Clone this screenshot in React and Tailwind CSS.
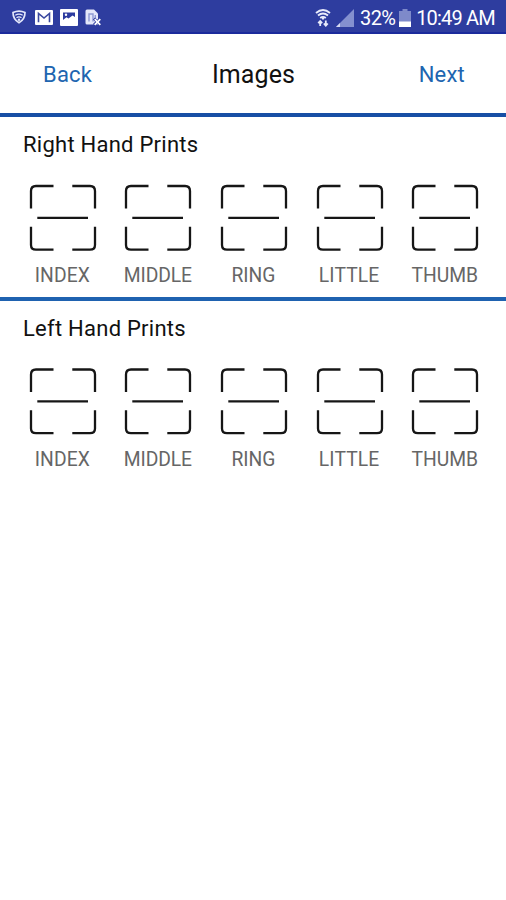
const FINGERS = [
  { label: 'INDEX', spacing: 'tracking-[0.1px]' },
  { label: 'MIDDLE', spacing: 'tracking-[-0.1px]' },
  { label: 'RING', spacing: 'tracking-[0px]' },
  { label: 'LITTLE', spacing: 'tracking-[0.1px]' },
  { label: 'THUMB', spacing: 'tracking-[0px]' },
];

const ShieldIcon = () => (
  <svg width="14" height="14" viewBox="0 0 14 14" fill="none" stroke="#e4e8fb">
    <path d="M1 2.6Q7 -.4 13 2.6Q13 9.5 7 12.8Q1 9.5 1 2.6Z" strokeWidth="1.7" />
    <path d="M3.3 5.2Q7 3.2 10.7 5.2M4.5 7.7Q7 6.2 9.5 7.7" strokeWidth="1.3" />
    <circle cx="7" cy="9.7" r="1.2" fill="#e4e8fb" stroke="none" />
  </svg>
);

const MailIcon = () => (
  <svg width="18" height="15" viewBox="0 0 18 15">
    <rect width="18" height="15" rx="1" fill="#fff" />
    <path d="M3.5 12.3V3.4L9 8L14.5 3.4V12.3" fill="none" stroke="#3a489f" strokeWidth="1.6" />
  </svg>
);

const PictureIcon = () => (
  <svg width="18" height="17" viewBox="0 0 18 17">
    <rect width="18" height="17" rx="1" fill="#fff" />
    <path d="M3 3.5H15V8L12.5 6.5L8.5 9.5L6.5 8.3L3 11Z" fill="#2c3b9f" />
    <circle cx="6" cy="5.8" r="1.2" fill="#fff" />
  </svg>
);

const DocumentIcon = () => (
  <svg width="17" height="17" viewBox="0 0 17 17">
    <path d="M2 .5H9L13 4.5V15.5H2Q.5 15.5 .5 14V2Q.5 .5 2 .5Z" fill="#e4e8fa" />
    <path d="M4 12.5V5H8V12.5M10.3 6V9.5" fill="none" stroke="#8f9bd3" strokeWidth="1.4" />
    <path d="M9 9.5L15.5 16M15.5 9.5L9 16" stroke="#2c3b9f" strokeWidth="3" />
    <path d="M9.7 10.2L15.3 15.8M15.3 10.2L9.7 15.8" stroke="#fff" strokeWidth="1.8" />
  </svg>
);

const WifiIcon = () => (
  <svg width="16" height="18" viewBox="0 0 16 18" fill="none" stroke="#e8ebfa">
    <path d="M1 4Q8 -1.8 15 4M3 6.6Q8 2.6 13 6.6M5.2 9Q8 6.8 10.8 9" strokeWidth="1.9" />
    <path d="M8 8V10.5" strokeWidth="2" />
    <path d="M5.2 17V12M3.2 14.2L5.2 12L7.2 14.2M10.8 11.5V16.5M8.8 14.5L10.8 16.7L12.8 14.5" strokeWidth="1.8" />
  </svg>
);

const SignalIcon = () => (
  <svg width="18" height="18" viewBox="0 0 18 18">
    <path d="M18 0V18H0Z" fill="#8490cf" />
    <path d="M4 14V18H0Z" fill="#d5daf2" />
  </svg>
);

const BatteryIcon = () => (
  <svg width="12" height="18" viewBox="0 0 12 18">
    <path d="M3.5 0H8.5V2H12V18H0V2H3.5Z" fill="#7e8aca" />
    <path d="M0 12.5H12V18H0Z" fill="#fff" />
  </svg>
);

const ScanIcon = ({ top = 0 }) => (
  <svg width="68" height="68" viewBox={`0 ${top} 68 68`} fill="none" stroke="#161616" strokeWidth="2.3">
    <path d="M2 24.5V7Q2 2 7 2H24.5" />
    <path d="M43.3 2H61Q66 2 66 7V24.5" />
    <path d="M2 42.8V61Q2 65.7 7 65.7H24.5" />
    <path d="M43.3 65.7H61Q66 65.7 66 61V42.8" />
    <path d="M8.3 33.8H59" />
  </svg>
);

const StatusBar = () => (
  <div className="flex h-[34px] items-center justify-between border-b-2 border-[#1b2b9c] bg-[#2e3d9f] pl-3 pr-[11px] text-white">
    <div className="flex items-center pt-0.5">
      <ShieldIcon />
      <div className="ml-[9px] flex items-center gap-[7px]">
        <MailIcon />
        <PictureIcon />
        <DocumentIcon />
      </div>
    </div>
    <div className="flex items-center pt-[3px]">
      <WifiIcon />
      <div className="ml-[5px] mr-[6px]"><SignalIcon /></div>
      <span className="text-[20px] leading-none tracking-[-0.7px]">32%</span>
      <div className="ml-[4px] mr-[5px]"><BatteryIcon /></div>
      <span className="text-[20px] leading-none tracking-[-0.8px]">10:49 AM</span>
    </div>
  </div>
);

const PrintSection = ({ title, iconTop }) => (
  <section className="flex flex-col">
    <h2 className="pl-[23px] pt-[15px] text-[22px] leading-[26px] tracking-[0.25px] text-[#111]">{title}</h2>
    <div className="mt-[26px] grid grid-cols-5 pl-[15px] pr-[13px]">
      {FINGERS.map(({ label, spacing }) => (
        <div key={label} className="flex flex-col items-center">
          <ScanIcon top={iconTop} />
          <span className={`mt-3 mr-px text-[19.3px] leading-6 text-[#666] ${spacing}`}>{label}</span>
        </div>
      ))}
    </div>
  </section>
);

export default function App() {
  return (
    <div className="flex h-[900px] w-[506px] flex-col overflow-hidden bg-white font-['Roboto',sans-serif]">
      <StatusBar />
      <header className="grid h-[83px] grid-cols-[1fr_auto_1fr] items-center border-b-4 border-[#174fa5] pl-[42px] pr-[41px] pt-[2px]">
        <button className="ml-px justify-self-start text-[22px] tracking-[0.2px] text-[#2065b0]">Back</button>
        <h1 className="text-[25px] tracking-[0.1px] text-[#111]">Images</h1>
        <button className="justify-self-end text-[22px] tracking-[0.2px] text-[#2065b0]">Next</button>
      </header>
      <div className="h-[183.5px] border-b-4 border-[#1f62b0]">
        <PrintSection title="Right Hand Prints" />
      </div>
      <PrintSection title="Left Hand Prints" iconTop={0.5} />
    </div>
  );
}
